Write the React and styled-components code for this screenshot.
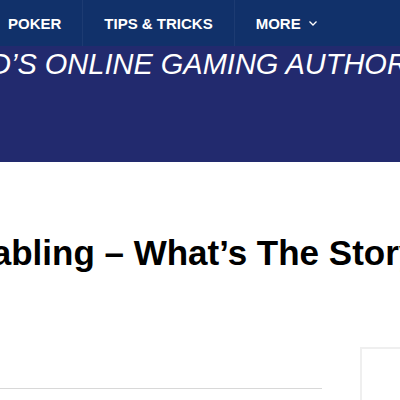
import styled, { createGlobalStyle } from 'styled-components';

const GlobalStyle = createGlobalStyle`
  body {
    margin: 0;
    font-family: "Liberation Sans", Arial, sans-serif;
    background: #fff;
    overflow: hidden;
  }
`

const Page = styled.div`
  width: 400px;
  height: 400px;
  overflow: hidden;
`

const NavBar = styled.nav`
  height: 46px;
  background: #11316a;
  overflow: hidden;
`

const NavList = styled.ul`
  display: flex;
  margin: 0 0 0 -13px;
  padding: 0;
  list-style: none;
  white-space: nowrap;
`

const NavItem = styled.li`
  display: flex;
  align-items: center;
  gap: 8px;
  height: 46px;
  padding: 0 21px;
  border-right: 1px solid #1d3b72;
  color: #fff;
  font-size: 15px;
  font-weight: bold;
  text-transform: uppercase;

  &:last-child {
    border-right: none;
  }
`

const Banner = styled.header`
  height: 116px;
  background: #222a6e;
  overflow: hidden;
`

const Tagline = styled.p`
  margin: 0 0 0 -97px;
  padding-top: 1px;
  color: #fff;
  font-size: 29px;
  font-style: italic;
  line-height: 34px;
  white-space: nowrap;
  text-transform: uppercase;
`

const Main = styled.main`
  overflow: hidden;
`

const Title = styled.h1`
  margin: 70px 0 0 -53px;
  color: #000;
  font-size: 35px;
  font-weight: bold;
  line-height: 42px;
  white-space: nowrap;
`

const ContentRow = styled.div`
  display: flex;
  gap: 38px;
  margin-top: 73px;
`

const Column = styled.div`
  width: 322px;
  padding-top: 41px;
`

const Divider = styled.hr`
  margin: 0;
  border: none;
  border-top: 1px solid #d8d8d8;
`

const Sidebar = styled.aside`
  flex: 1;
  height: 80px;
  border-top: 2px solid #efefef;
  border-left: 2px solid #efefef;
`

function Chevron() {
  return (
    <svg width="8" height="5" viewBox="0 0 8 5">
      <polyline points="0.5,0.5 4,4 7.5,0.5" fill="none" stroke="#fff" strokeWidth="1.3" />
    </svg>
  )
}

export default function App() {
  return (
    <Page>
      <GlobalStyle />
      <NavBar>
        <NavList>
          <NavItem>Poker</NavItem>
          <NavItem>Tips &amp; Tricks</NavItem>
          <NavItem>More <Chevron /></NavItem>
        </NavList>
      </NavBar>
      <Banner>
        <Tagline>World’s Online Gaming Authority</Tagline>
      </Banner>
      <Main>
        <Title>Enabling – What’s The Story?</Title>
        <ContentRow>
          <Column>
            <Divider />
          </Column>
          <Sidebar />
        </ContentRow>
      </Main>
    </Page>
  )
}
